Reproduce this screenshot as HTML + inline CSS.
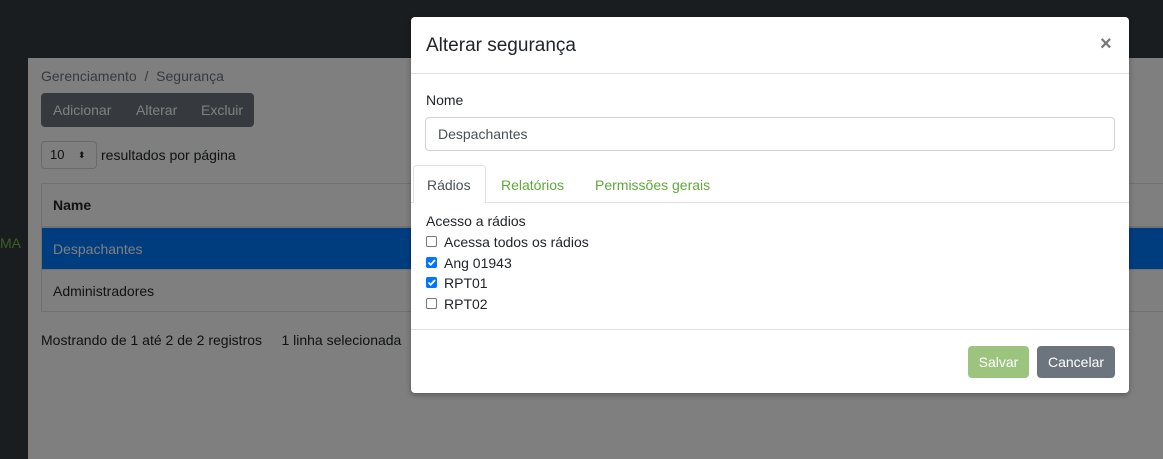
<!DOCTYPE html>
<html><head><meta charset="utf-8"><style>
*{box-sizing:border-box;margin:0;padding:0}
body{width:1163px;height:459px;overflow:hidden;font-family:"Liberation Sans",sans-serif;font-size:14px;color:#212529;background:#fff;position:relative}
.a{position:absolute;white-space:nowrap}
.ov{position:absolute;left:0;top:0;width:1163px;height:459px;background:rgba(0,0,0,.5)}
.cb{position:absolute;width:11px;height:11px;border:1px solid #767676;border-radius:2px;background:#fff}
.cb.on{background:#0075ff;border-color:#0075ff}
</style></head><body>
<div class="a" style="left:0;top:0;width:1163px;height:58px;background:#343a40"></div>
<div class="a" style="left:0;top:58px;width:28px;height:401px;background:#343a40"></div>
<div class="a" style="left:0;top:235px;color:#6fbf4a;font-size:14px">MA</div>
<div class="a" style="left:41px;top:68px;color:#6c757d">Gerenciamento &nbsp;/&nbsp; Segurança</div>
<div class="a" style="left:41px;top:93px;width:213px;height:34px;background:#6c757d;border-radius:4px"></div>
<div class="a" style="left:53px;top:102px;color:#fff">Adicionar</div>
<div class="a" style="left:136px;top:102px;color:#fff">Alterar</div>
<div class="a" style="left:201px;top:102px;color:#fff">Excluir</div>
<div class="a" style="left:41px;top:141px;width:56px;height:28px;border:1px solid #ced4da;border-radius:4px;font-size:13px;line-height:26px;padding-left:8px">10 <span style="position:absolute;left:36px;font-size:9px">⬍</span></div>
<div class="a" style="left:101px;top:147px">resultados por página</div>
<div class="a" style="left:41px;top:183px;width:1122px;height:129px;border:1px solid #dee2e6;border-right:none"></div>
<div class="a" style="left:53px;top:197px;font-weight:bold">Name</div>
<div class="a" style="left:41px;top:226px;width:1122px;height:2px;background:#dee2e6"></div>
<div class="a" style="left:42px;top:228px;width:1121px;height:41px;background:#007bff"></div>
<div class="a" style="left:53px;top:241px;color:#fff">Despachantes</div>
<div class="a" style="left:41px;top:269px;width:1122px;height:1px;background:#dee2e6"></div>
<div class="a" style="left:53px;top:283px">Administradores</div>
<div class="a" style="left:41px;top:332px">Mostrando de 1 até 2 de 2 registros &nbsp;&nbsp;&nbsp;&nbsp;1 linha selecionada</div>
<div class="ov"></div>
<div class="a" style="left:411px;top:17px;width:718px;height:376px;background:#fff;border-radius:4px;box-shadow:0 2px 6px rgba(0,0,0,.3)">
 <div class="a" style="left:15px;top:18px;font-size:19px;font-weight:500">Alterar segurança</div>
 <div class="a" style="left:689px;top:16px;font-size:20px;font-weight:bold;color:#777">×</div>
 <div class="a" style="left:0;top:56px;width:718px;height:1px;background:#dee2e6"></div>
 <div class="a" style="left:15px;top:75px">Nome</div>
 <div class="a" style="left:14px;top:100px;width:690px;height:34px;border:1px solid #ced4da;border-radius:4px;line-height:32px;padding-left:12px;color:#495057">Despachantes</div>
 <div class="a" style="left:0;top:185px;width:718px;height:1px;background:#dee2e6"></div>
 <div class="a" style="left:2px;top:148px;width:73px;height:38px;border:1px solid #dee2e6;border-bottom:none;border-radius:4px 4px 0 0;background:#fff"></div>
 <div class="a" style="left:16px;top:160px;color:#495057">Rádios</div>
 <div class="a" style="left:90px;top:160px;color:#5fa83a">Relatórios</div>
 <div class="a" style="left:184px;top:160px;color:#5fa83a">Permissões gerais</div>
 <div class="a" style="left:15px;top:196px">Acesso a rádios</div>
 <div class="cb" style="left:15px;top:219px"></div><div class="a" style="left:33px;top:217px">Acessa todos os rádios</div>
 <div class="cb on" style="left:15px;top:240px"><svg width="9" height="9" style="position:absolute;left:0;top:0"><path d="M1.5 4.5L3.7 6.7L8 2" stroke="#fff" stroke-width="1.8" fill="none"/></svg></div><div class="a" style="left:33px;top:238px">Ang 01943</div>
 <div class="cb on" style="left:15px;top:260px"><svg width="9" height="9" style="position:absolute;left:0;top:0"><path d="M1.5 4.5L3.7 6.7L8 2" stroke="#fff" stroke-width="1.8" fill="none"/></svg></div><div class="a" style="left:33px;top:258px">RPT01</div>
 <div class="cb" style="left:15px;top:281px"></div><div class="a" style="left:33px;top:279px">RPT02</div>
 <div class="a" style="left:0;top:312px;width:718px;height:1px;background:#dee2e6"></div>
 <div class="a" style="left:557px;top:329px;width:61px;height:32px;background:#9cc47e;border-radius:4px;color:#fff;line-height:32px;text-align:center">Salvar</div>
 <div class="a" style="left:626px;top:329px;width:78px;height:32px;background:#6c757d;border-radius:4px;color:#fff;line-height:32px;text-align:center">Cancelar</div>
</div>
</body></html>
